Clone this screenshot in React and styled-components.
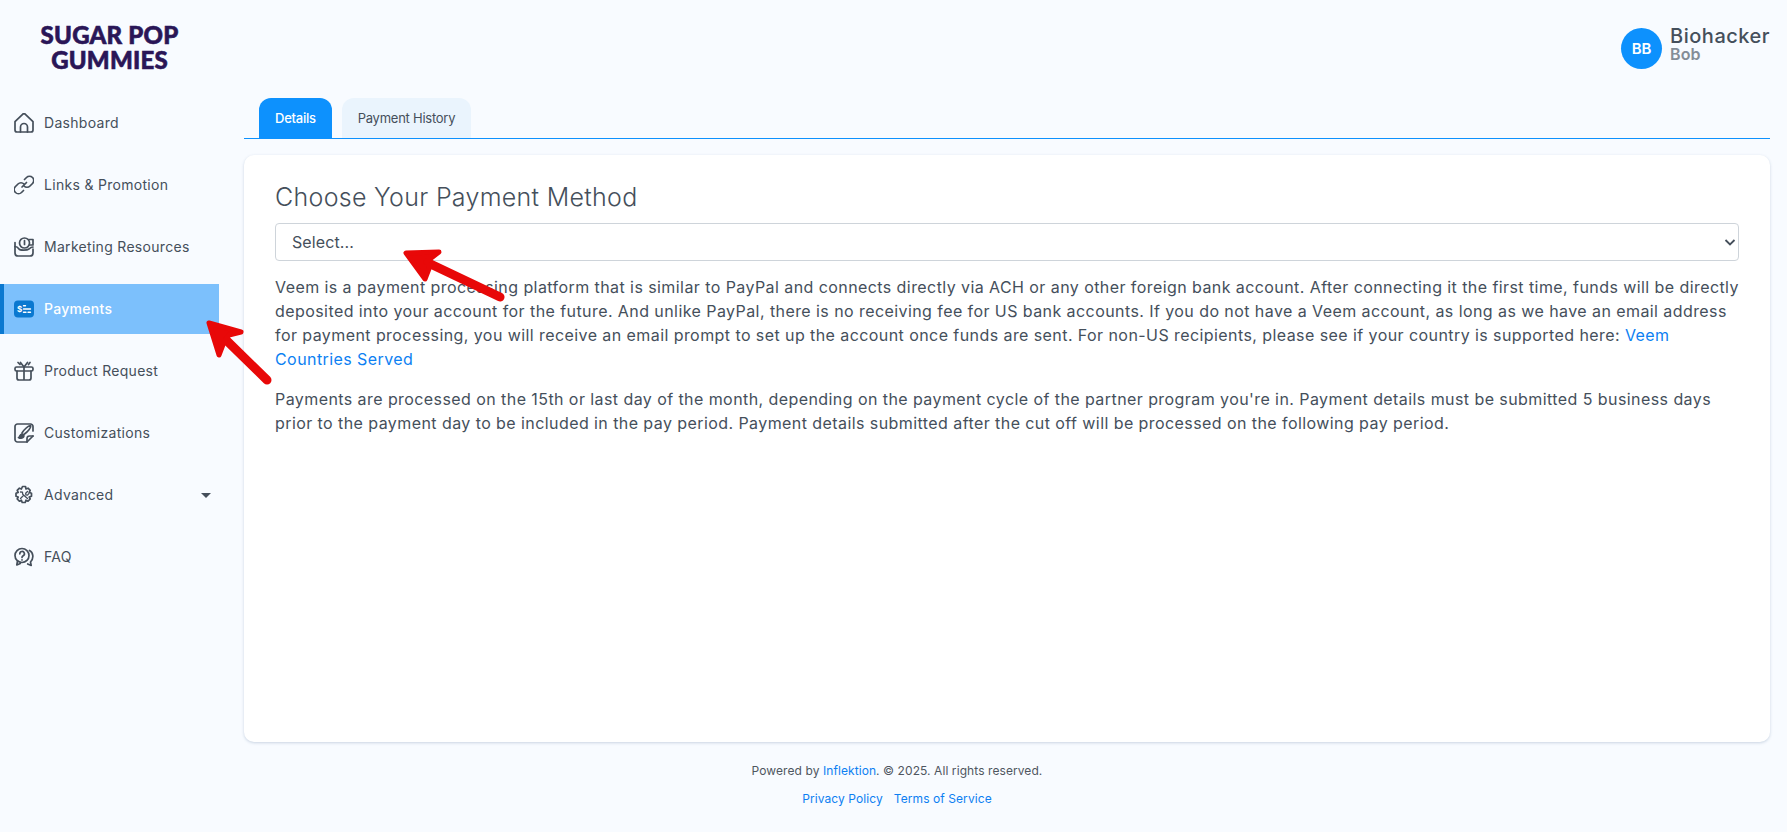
import React from "react";
import styled, { createGlobalStyle } from "styled-components";

const Global = createGlobalStyle`
  html, body { margin: 0; padding: 0; background: #f8fbff; }
  body { font-family: Inter, "Open Sans", sans-serif; color: #454f5b; }
  #root { position: relative; width: 1787px; height: 832px; overflow: hidden; }
`;

const Page = styled.div`
  display: grid;
  grid-template-columns: 244px 1fr;
  grid-template-rows: 742px 1fr;
  height: 832px;
`;
const Sidebar = styled.aside`
  display: flex;
  flex-direction: column;
`;
const LogoBox = styled.div`
  height: 92px;
  padding-top: 22px;
  box-sizing: border-box;
  width: 219px;
`;
const Logo = styled.div`
  width: 219px;
  text-align: center;
  font-family: Lato, sans-serif;
  font-weight: 900;
  font-size: 24px;
  line-height: 25px;
  letter-spacing: 0.2px;
  color: #2a1657;
  -webkit-text-stroke: 0.6px #2a1657;
`;
const Nav = styled.nav`
  display: flex;
  flex-direction: column;
  gap: 12px;
  width: 219px;
  margin-top: 6px;
`;
const NavItem = styled.div`
  height: 50px;
  display: flex;
  align-items: center;
  gap: 10px;
  box-sizing: border-box;
  padding: 0 7px 0 ${p => (p.$active ? "10px" : "14px")};
  border-left: ${p => (p.$active ? "4px solid #0a78d0" : "none")};
  background: ${p => (p.$active ? "#7cc0fc" : "transparent")};
  color: ${p => (p.$active ? "#fff" : "#454f5b")};
  font-size: 14px;
  font-weight: ${p => (p.$active ? 500 : 400)};
  letter-spacing: 0.3px;
`;
const NavLabel = styled.span`
  flex: 1;
  margin-top: -1px;
`;
const Caret = styled.span`
  width: 0;
  height: 0;
  margin-right: 1px;
  border-left: 5px solid transparent;
  border-right: 5px solid transparent;
  border-top: 5px solid #454f5b;
`;
const IconSvg = styled.svg`
  width: 20px;
  height: 20px;
  flex: none;
  fill: none;
  stroke: #454f5b;
  stroke-width: 1.7;
  stroke-linecap: round;
  stroke-linejoin: round;
`;
const PayIcon = styled.svg`
  width: 20px;
  height: 20px;
  flex: none;
`;
const Main = styled.main`
  display: flex;
  flex-direction: column;
  padding-right: 17px;
  min-width: 0;
`;
const Header = styled.header`
  height: 98px;
  display: flex;
  justify-content: flex-end;
  align-items: flex-start;
  padding-top: 28px;
  box-sizing: border-box;
  gap: 8px;
`;
const Avatar = styled.div`
  width: 41px;
  height: 41px;
  border-radius: 50%;
  background: #0d91fd;
  color: #fff;
  font-weight: 600;
  font-size: 15px;
  display: flex;
  align-items: center;
  justify-content: center;
`;
const UserBox = styled.div`
  display: flex;
  flex-direction: column;
`;
const UserName = styled.div`
  font-size: 20px;
  font-weight: 500;
  line-height: 20px;
  margin-top: -2px;
  letter-spacing: 0.5px;
`;
const UserSub = styled.div`
  font-size: 16px;
  font-weight: 600;
  line-height: 17px;
  color: #848d97;
`;
const Tabs = styled.div`
  display: flex;
  gap: 10px;
  padding-left: 15px;
  height: 40px;
  border-bottom: 1px solid #0d91fd;
`;
const Tab = styled.div`
  height: 40px;
  display: flex;
  align-items: center;
  padding: 0 16px;
  font-size: 13px;
  letter-spacing: -0.25px;
  font-weight: ${p => (p.$active ? 500 : 400)};
  border-radius: 12px 12px 0 0;
  background: ${p => (p.$active ? "#0d91fd" : "#eaf4fd")};
  color: ${p => (p.$active ? "#fff" : "#454f5b")};
`;
const Card = styled.section`
  margin-top: 16px;
  height: 587px;
  box-sizing: border-box;
  background: #fff;
  border-radius: 10px;
  box-shadow: 0 1px 3px rgba(145, 165, 190, 0.45);
  padding: 25px 31px;
`;
const Title = styled.h2`
  margin: 0;
  font-size: 25px;
  font-weight: 300;
  line-height: 34px;
  letter-spacing: 0.3px;
`;
const Select = styled.div`
  margin-top: 9px;
  height: 38px;
  box-sizing: border-box;
  border: 1px solid #ced4da;
  border-radius: 4px;
  padding: 0 1px 0 16px;
  display: flex;
  align-items: center;
  justify-content: space-between;
  font-size: 16px;
  letter-spacing: 0.1px;
`;
const Para = styled.p`
  margin: 14px 0 16px;
  font-size: 16px;
  line-height: 24px;
  letter-spacing: 0.425px;
`;
const A = styled.span`
  color: #0d7ff2;
`;
const Footer = styled.footer`
  grid-column: 1 / -1;
  display: flex;
  flex-direction: column;
  align-items: center;
  font-size: 12px;
  padding: 20px 0 0 7px;
  gap: 11px;
  line-height: 17px;
  letter-spacing: 0.08px;
  color: #4f5660;
`;
const Links = styled.div`
  display: flex;
  gap: 11px;
  color: #0d7ff2;
`;
const Arrow = styled.svg`
  position: absolute;
  left: 0;
  top: 0;
  width: 1787px;
  height: 832px;
  pointer-events: none;
`;

const I = ({ children }) => <IconSvg viewBox="0 0 20 20">{children}</IconSvg>;

const icons = {
  home: <I><path d="M1 8.600 8.600 1.300a2 2 0 0 1 2.800 0L19 8.600v8.400a2 2 0 0 1-2 2H3a2 2 0 0 1-2-2z" /><path d="M6.500 19v-5a3.500 3.500 0 0 1 7 0v5" /></I>,
  link: <I><path d="M8 12l4.500-4.500" /><path d="M10.500 4.500l2-2a4.200 4.200 0 0 1 6 6l-2.500 2.500a4.200 4.200 0 0 1-6 0" /><path d="M9.500 15.500l-2 2a4.200 4.200 0 0 1-6-6l2.500-2.500a4.200 4.200 0 0 1 6 0" /></I>,
  market: <I><path d="M1 5.500v10.500a3 3 0 0 0 3 3h12a3 3 0 0 0 3-3v-4" /><path d="M1 9.500c2 0 3 1 4 2.500 1 1.500 8 1.500 10 0 1-1 2-2 4-2" /><circle cx="10.500" cy="6" r="5" /><path d="M10.500 3.500v4M15.500 2.500H19v5.500h-3.500" /></I>,
  pay: <PayIcon viewBox="0 0 20 20"><rect x="0" y="1.500" width="20" height="17" rx="4" fill="#0a78d0" /><text x="3" y="13" fill="#fff" fontSize="8" fontWeight="700" fontFamily="Inter">$</text><path d="M9.500 6.800h2M9.500 10h7M9.500 13.200h2.500M14 13.200h2.500" stroke="#fff" strokeWidth="1.400" strokeLinecap="round" /></PayIcon>,
  gift: <I><rect x="1" y="6" width="18" height="4" rx="1.500" /><path d="M3 10v7a2 2 0 0 0 2 2h10a2 2 0 0 0 2-2v-7M10 6v13" /><path d="M10 6 6.500 1.500M10 6l3.500-4.500M6 3.500 4 1.500M14.500 3.500 16 1.500" /></I>,
  brush: <I><path d="M19 8V3.500A2.500 2.500 0 0 0 16.500 1h-13A2.500 2.500 0 0 0 1 3.500v13A2.500 2.500 0 0 0 3.500 19H13l6-6" /><path d="M13 19v-3.500a2.500 2.500 0 0 1 2.500-2.500H19" /><path d="M8 10c2-3 6-7 8.500-7.500 1 2-3 6.500-6 8.500" /><path d="M4.500 14.500c1.500 0 1-3.500 3.500-3.500 1.500 0 2.500 1.500 1.500 3-1 1.500-3.500 1.500-5 .5z" fill="#454f5b" /></I>,
  gear: <I><path d="M8.500 1.500h3l.5 2.500 2-.8 2.200 2.200-1 2 2.300.8v3l-2.300.8 1 2-2.200 2.200-2-1-.8 2.300h-3l-.8-2.300-2 1-2.200-2.200 1-2-2.200-.8v-3l2.200-.8-1-2 2.200-2.200 2 .8z" /><path d="M6.500 7l2 .2.200 2 4.800 4.300M13.500 6.500l-1.800 1.800.2 1.600 1.600.2 1.300-1.500M6.500 13.500 9 11" strokeWidth="1.300" /></I>,
  faq: <I><circle cx="8" cy="8.500" r="7" /><path d="M5.800 6.800a2.300 2.300 0 1 1 3.400 2c-.8.500-1.200.9-1.200 1.700M8 12.800v.1" /><path d="M15.500 3.500c4 2 4.500 8 1 11.500l.7 3.500-3.500-1.500M3.500 14l-.7 4 3.500-1.500" /></I>,
};

const items = [
  ["home", "Dashboard"],
  ["link", "Links & Promotion"],
  ["market", "Marketing Resources"],
  ["pay", "Payments", true],
  ["gift", "Product Request"],
  ["brush", "Customizations"],
  ["gear", "Advanced", false, true],
  ["faq", "FAQ"],
];

export default function App() {
  return (
    <>
      <Global />
      <Page>
        <Sidebar>
          <LogoBox>
            <Logo>SUGAR POP<br />GUMMIES</Logo>
          </LogoBox>
          <Nav>
            {items.map(([ic, label, active, caret]) => (
              <NavItem key={label} $active={active}>
                {icons[ic]}
                <NavLabel>{label}</NavLabel>
                {caret && <Caret />}
              </NavItem>
            ))}
          </Nav>
        </Sidebar>
        <Main>
          <Header>
            <Avatar>BB</Avatar>
            <UserBox>
              <UserName>Biohacker</UserName>
              <UserSub>Bob</UserSub>
            </UserBox>
          </Header>
          <Tabs>
            <Tab $active>Details</Tab>
            <Tab>Payment History</Tab>
          </Tabs>
          <Card>
            <Title>Choose Your Payment Method</Title>
            <Select>
              Select...
              <svg width="14" height="14" viewBox="0 0 14 14" fill="none" stroke="#454f5b" strokeWidth="1.800"><path d="M2.500 5l4.500 4.500L11.500 5" /></svg>
            </Select>
            <Para>
              Veem is a payment processing platform that is similar to PayPal and connects directly via ACH or any other foreign bank account. After connecting it the first time, funds will be directly deposited into your account for the future. And unlike PayPal, there is no receiving fee for US bank accounts. If you do not have a Veem account, as long as we have an email address for payment processing, you will receive an email prompt to set up the account once funds are sent. For non-US recipients, please see if your country is supported here: <A>Veem Countries Served</A>
            </Para>
            <Para>
              Payments are processed on the 15th or last day of the month, depending on the payment cycle of the partner program you're in. Payment details must be submitted 5 business days prior to the payment day to be included in the pay period. Payment details submitted after the cut off will be processed on the following pay period.
            </Para>
          </Card>
        </Main>
        <Footer>
          <div>Powered by <A>Inflektion</A>. © 2025. All rights reserved.</div>
          <Links><span>Privacy Policy</span><span>Terms of Service</span></Links>
        </Footer>
      </Page>
      <Arrow viewBox="0 0 1787 832">
        <g fill="#e80808" stroke="#e80808" strokeLinecap="round" strokeLinejoin="round">
          <path d="M500 297 420 259" fill="none" strokeWidth="9" />
          <path d="M406 253 439 252 426 262 430 266 425 279Z" strokeWidth="5" />
          <path d="M267 380 222 336" fill="none" strokeWidth="9" />
          <path d="M209 323 241 332 229 335 224 342 219 355Z" strokeWidth="5" />
        </g>
      </Arrow>
    </>
  );
}
